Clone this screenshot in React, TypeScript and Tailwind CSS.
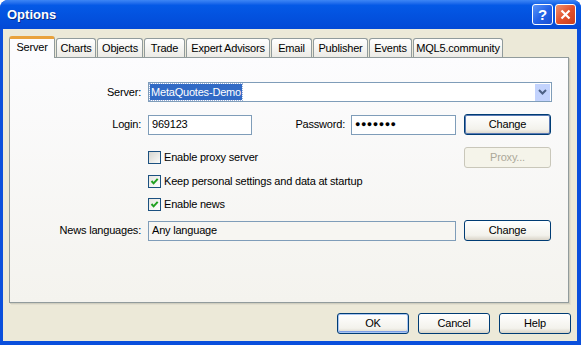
import React from "react";

const TABS = [
  { name: "Server", w: "w-[46px]" },
  { name: "Charts", w: "w-[40px]" },
  { name: "Objects", w: "w-[46px]" },
  { name: "Trade", w: "w-[41px]" },
  { name: "Expert Advisors", w: "w-[84px]" },
  { name: "Email", w: "w-[41px]" },
  { name: "Publisher", w: "w-[55px]" },
  { name: "Events", w: "w-[43px]" },
  { name: "MQL5.community", w: "w-[90px]" },
];

function Check({ checked }: { checked?: boolean }) {
  return (
    <span
      className={`w-[13px] h-[13px] shrink-0 border border-[#1C5180] flex items-center justify-center ${
        checked
          ? "bg-linear-to-br from-[#E6E6E0] to-[#FFFFFF]"
          : "bg-linear-to-br from-[#D6D6D0] to-[#FBFBF9]"
      }`}
    >
      {checked && (
        <svg width="9" height="9" viewBox="0 0 9 9">
          <path d="M1.5 4 L3.6 6.3 L7.7 1.8" stroke="#21A121" strokeWidth="2" fill="none" />
        </svg>
      )}
    </span>
  );
}

function XPButton({
  children,
  w,
  def,
  disabled,
  focus,
}: {
  children: React.ReactNode;
  w: string;
  def?: boolean;
  disabled?: boolean;
  focus?: boolean;
}) {
  if (disabled) {
    return (
      <div
        className={`${w} h-[21px] shrink-0 rounded-[3px] border border-[#C9C7BA] bg-[#F5F4EA] flex items-center justify-center text-[#ACA899]`}
      >
        {children}
      </div>
    );
  }
  return (
    <div
      className={`${w} h-[21px] shrink-0 rounded-[3px] border border-[#003C74] bg-linear-to-b from-[#FFFFFF] via-[#F3F2EC] via-75% to-[#D9D4C8] flex items-center justify-center ${
        def ? "shadow-[inset_0_0_0_1px_#A9C6F2,inset_0_-1px_0_1px_#7E9EE6]" : ""
      } ${focus ? "shadow-[inset_0_0_0_1px_#5A7AB4]" : ""}`}
    >
      {children}
    </div>
  );
}

function Field({ w, children, bg }: { w: string; children?: React.ReactNode; bg?: string }) {
  return (
    <div
      className={`${w} h-[20px] shrink-0 border border-[#7F9DB9] ${bg ?? "bg-white"} flex items-center pl-[3px]`}
    >
      {children}
    </div>
  );
}

function Label({ text }: { text: string }) {
  return <div className="w-[138px] shrink-0 pr-[7px] text-right">{text}</div>;
}

export default function App() {
  return (
    <div className="w-[581px] h-[345px] bg-white [font-family:'Liberation_Sans',Arial,sans-serif] text-[11px] tracking-[-0.2px] text-black leading-none">
      <div className="w-full h-full flex flex-col rounded-t-[8px] overflow-hidden bg-[#0A4FDC]">
        {/* title bar */}
        <div className="h-[29px] shrink-0 flex items-center bg-linear-to-b from-[#3D86F5] via-[#0459E6] via-[18%] to-[#0349D6] pl-[7px] pr-[5px]">
          <div className="text-white font-bold text-[13px] tracking-normal [text-shadow:1px_1px_0_#0A2F8A]">Options</div>
          <div className="ml-auto flex gap-[2px]">
            <div className="w-[21px] h-[21px] rounded-[3px] border border-white bg-linear-to-br from-[#5A94F8] via-[#2463E8] to-[#1A4ED2] flex items-center justify-center text-white font-bold text-[15px]">
              ?
            </div>
            <div className="w-[21px] h-[21px] rounded-[3px] border border-white bg-linear-to-br from-[#F0906C] via-[#E2512C] to-[#C73E1C] flex items-center justify-center">
              <svg width="11" height="11" viewBox="0 0 11 11">
                <path d="M1.5 1.5 L9.5 9.5 M9.5 1.5 L1.5 9.5" stroke="white" strokeWidth="2.2" />
              </svg>
            </div>
          </div>
        </div>

        {/* body */}
        <div className="flex-1 ml-[3px] mr-[4px] mb-[4px] bg-[#ECE9D8] flex flex-col pt-[7px] pl-[6px] pr-[8px]">
          {/* tabs */}
          <div className="h-[21px] flex items-end gap-[1px] relative z-10">
            {TABS.map((t, i) =>
              i === 0 ? (
                <div
                  key={t.name}
                  className={`${t.w} h-[22px] -mb-px rounded-t-[3px] border-x border-[#919B9C] border-t-[3px] border-t-[#E9A23C] bg-[#FCFCFE] flex items-center justify-center pb-[2px]`}
                >
                  {t.name}
                </div>
              ) : (
                <div
                  key={t.name}
                  className={`${t.w} h-[19px] rounded-t-[3px] border-x border-t border-[#919B9C] bg-linear-to-b from-[#FFFFFF] to-[#ECEBE6] flex items-center justify-center`}
                >
                  {t.name}
                </div>
              )
            )}
          </div>

          {/* panel */}
          <div className="flex-1 border border-[#919B9C] bg-linear-to-b from-[#FCFCFE] to-[#F4F3EE] shadow-[1px_1px_0_#D0CEBF,2px_2px_0_#E2DFD0] flex flex-col pt-[24px] pr-[16px]">
            {/* Server */}
            <div className="h-[20px] flex items-center">
              <Label text="Server:" />
              <div className="flex-1 h-[20px] border border-[#7F9DB9] bg-white flex items-center pl-[1px] pr-[1px]">
                <span className="bg-[#316AC5] text-white px-[1px] h-[16px] flex items-center outline outline-1 outline-dotted outline-[#9AB0D8]">
                  MetaQuotes-Demo
                </span>
                <div className="ml-auto w-[15px] h-[17px] bg-[#C3D3FD] flex items-center justify-center">
                  <svg width="9" height="6" viewBox="0 0 9 6">
                    <path d="M1 1 L4.5 4.5 L8 1" stroke="#4D6185" strokeWidth="2" fill="none" />
                  </svg>
                </div>
              </div>
            </div>

            {/* Login / Password */}
            <div className="mt-[12px] h-[21px] flex items-center">
              <Label text="Login:" />
              <Field w="w-[104px]">969123</Field>
              <div className="w-[99px] shrink-0 pr-[6px] text-right">Password:</div>
              <Field w="w-[105px]">
                <span className="text-[9px] tracking-[0.5px]">●●●●●●●</span>
              </Field>
              <div className="ml-[8px]">
                <XPButton w="w-[87px]" focus>
                  Change
                </XPButton>
              </div>
            </div>

            {/* Proxy */}
            <div className="mt-[12px] h-[21px] flex items-center">
              <div className="w-[138px] shrink-0" />
              <Check />
              <span className="ml-[3px]">Enable proxy server</span>
              <div className="ml-auto mr-[1px]">
                <XPButton w="w-[87px]" disabled>
                  Proxy...
                </XPButton>
              </div>
            </div>

            <div className="mt-[3px] h-[20px] flex items-center">
              <div className="w-[138px] shrink-0" />
              <Check checked />
              <span className="ml-[3px]">Keep personal settings and data at startup</span>
            </div>

            <div className="mt-[3px] h-[20px] flex items-center">
              <div className="w-[138px] shrink-0" />
              <Check checked />
              <span className="ml-[3px]">Enable news</span>
            </div>

            {/* News languages */}
            <div className="mt-[6px] h-[21px] flex items-center">
              <Label text="News languages:" />
              <Field w="w-[308px]" bg="bg-[#F7F6F2]">
                Any language
              </Field>
              <div className="ml-[8px]">
                <XPButton w="w-[87px]">Change</XPButton>
              </div>
            </div>
          </div>

          {/* bottom buttons */}
          <div className="mt-[10px] mb-[7px] h-[21px] flex justify-end gap-[9px] -mr-[2px]">
            <XPButton w="w-[72px]" def>
              OK
            </XPButton>
            <XPButton w="w-[72px]">Cancel</XPButton>
            <XPButton w="w-[72px]">Help</XPButton>
          </div>
        </div>
      </div>
    </div>
  );
}
